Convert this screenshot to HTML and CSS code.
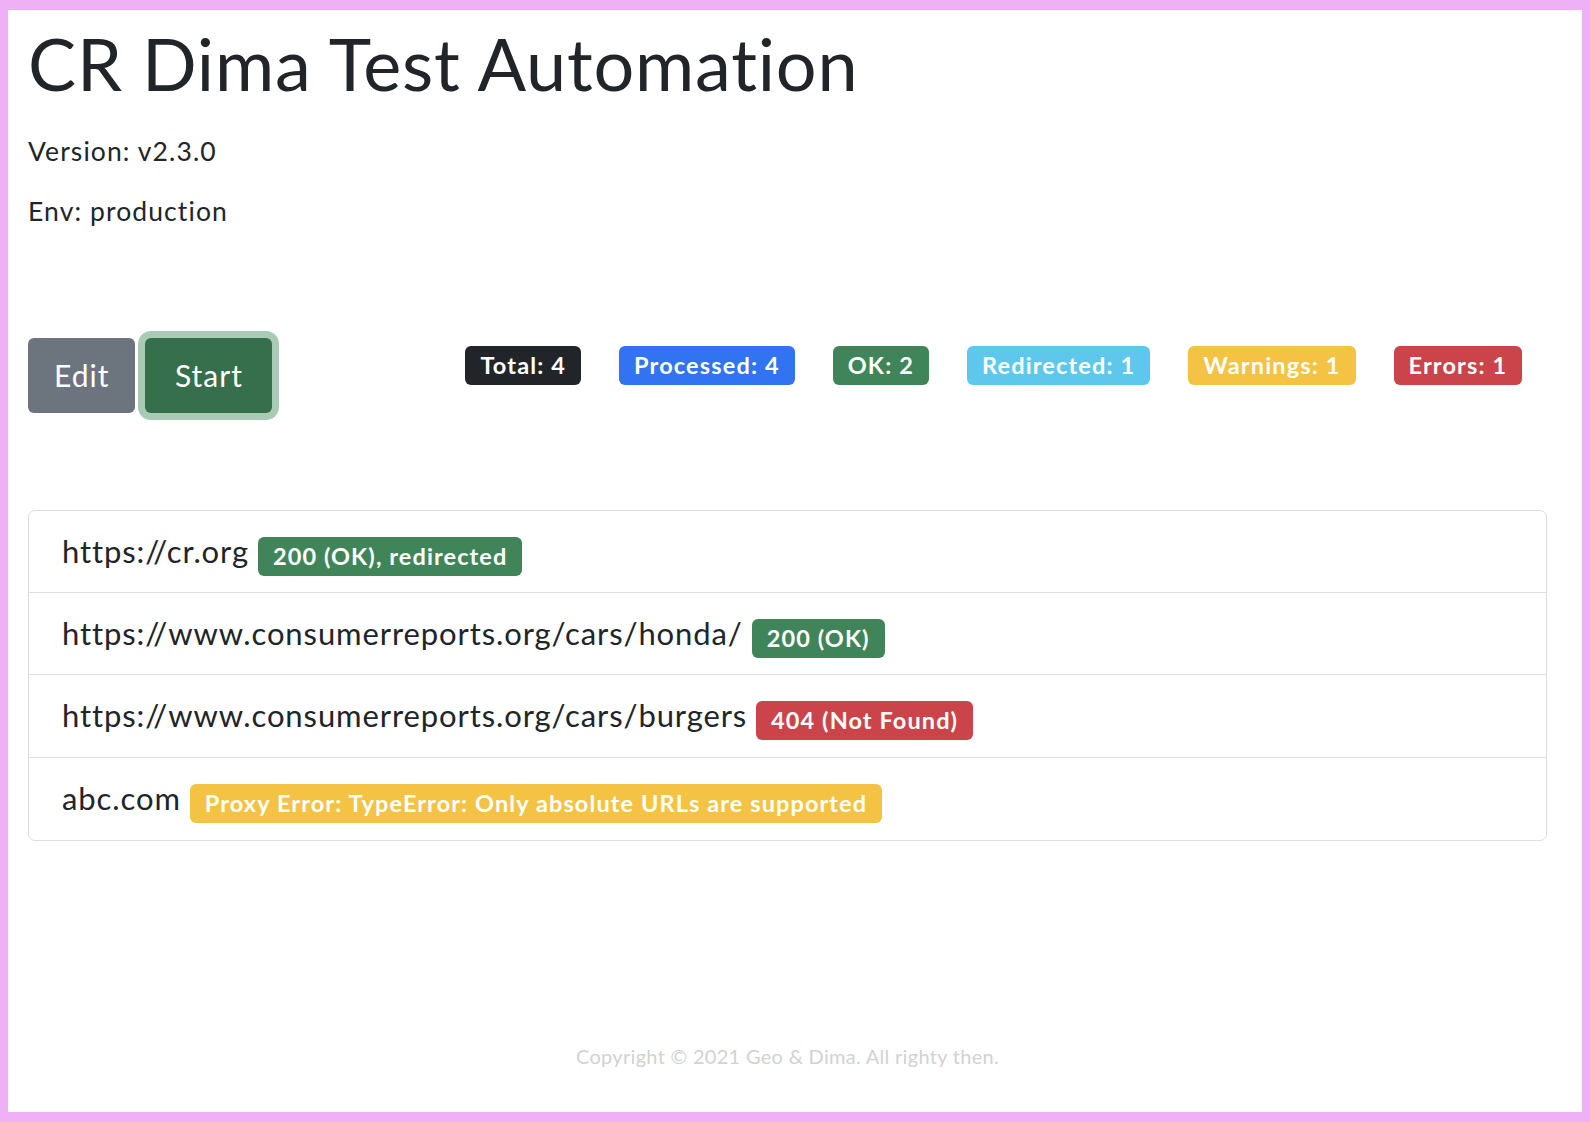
FILE: index.html
```html
<!DOCTYPE html>
<html lang="en">
<head>
<meta charset="utf-8">
<title>CR Dima Test Automation</title>
<link rel="stylesheet" href="styles.css">
</head>
<body>
<div class="frame">
  <main class="page">
    <h1 class="title">CR Dima Test Automation</h1>
    <p class="meta">Version: v2.3.0</p>
    <p class="meta">Env: production</p>

    <div class="toolbar">
      <div class="actions">
        <button class="btn btn-secondary" type="button">Edit</button>
        <button class="btn btn-success btn-focus" type="button">Start</button>
      </div>
      <div class="stats">
        <span class="badge bg-dark">Total: 4</span>
        <span class="badge bg-primary">Processed: 4</span>
        <span class="badge bg-success">OK: 2</span>
        <span class="badge bg-info">Redirected: 1</span>
        <span class="badge bg-warning">Warnings: 1</span>
        <span class="badge bg-danger">Errors: 1</span>
      </div>
    </div>

    <ul class="list">
      <li class="item"><span class="url">https://cr.org</span><span class="badge bg-success">200 (OK), redirected</span></li>
      <li class="item"><span class="url">https://www.consumerreports.org/cars/honda/</span><span class="badge bg-success">200 (OK)</span></li>
      <li class="item"><span class="url">https://www.consumerreports.org/cars/burgers</span><span class="badge bg-danger">404 (Not Found)</span></li>
      <li class="item"><span class="url">abc.com</span><span class="badge bg-warning">Proxy Error: TypeError: Only absolute URLs are supported</span></li>
    </ul>

    <footer class="footer">Copyright © 2021 Geo &amp; Dima. All righty then.</footer>
  </main>
</div>
</body>
</html>
```
FILE: styles.css
```css
html, body {
  margin: 0;
  padding: 0;
}

body {
  font-family: Lato, "Noto Sans", sans-serif;
  color: #212529;
  background: #ffffff;
}

.frame {
  box-sizing: border-box;
  height: 1122px;
  border-style: solid;
  border-color: #f0b0f6;
  border-width: 10px 8px 10px 8px;
  background: #ffffff;
}

.page {
  box-sizing: border-box;
  height: 100%;
  padding: 0 35px 0 20px;
  display: flex;
  flex-direction: column;
}

.title {
  margin: 10px 0 27px;
  font-size: 72px;
  line-height: 86px;
  font-weight: 400;
  letter-spacing: 0.8px;
}

.meta {
  margin: 0 0 24px;
  font-size: 26.5px;
  line-height: 36px;
  letter-spacing: 1.1px;
}

.toolbar {
  margin-top: 85px;
  display: flex;
  align-items: flex-start;
}

.actions {
  display: flex;
  gap: 10px;
}

.btn {
  border: 0;
  border-radius: 6px;
  padding: 15px 26px;
  font-family: Lato, "Noto Sans", sans-serif;
  font-size: 30px;
  line-height: 45px;
  letter-spacing: 1px;
  color: #ffffff;
  cursor: pointer;
}

.btn-secondary {
  background: #6c757d;
}

.btn-success {
  background: #366f4b;
  padding-left: 29.5px;
  padding-right: 29.5px;
}

.btn-focus {
  box-shadow: 0 0 0 7px #a9cbb6;
}

.stats {
  margin-left: 193px;
  margin-top: 8px;
  display: flex;
  gap: 38px;
}

.badge {
  display: inline-block;
  box-sizing: border-box;
  height: 39px;
  padding: 0 15px;
  border-radius: 6px;
  font-size: 23.5px;
  line-height: 39px;
  font-weight: 700;
  letter-spacing: 1.1px;
  color: #ffffff;
  white-space: nowrap;
}

.stats .badge {
  letter-spacing: 1.15px;
}

.bg-dark { background: #212529; }
.bg-primary { background: #3173f0; }
.bg-success { background: #40855a; }
.bg-info { background: #5dc8ec; }
.bg-warning { background: #f4c343; }
.bg-danger { background: #cb444a; }

.list {
  list-style: none;
  margin: 97px 0 0;
  padding: 0;
  border: 1px solid #dedede;
  border-radius: 7px;
}

.item {
  display: flex;
  align-items: flex-start;
  padding: 18px 33px 16px;
  border-top: 1px solid #dedede;
}

.item:first-child {
  border-top: 0;
}

.item:nth-child(n+3) {
  padding-bottom: 17px;
}

.url {
  font-size: 31px;
  line-height: 45px;
  letter-spacing: 0.9px;
}

.item .badge {
  margin: 8px 0 0 9px;
}

.footer {
  margin-top: auto;
  padding-bottom: 41px;
  text-align: center;
  font-size: 20px;
  line-height: 30px;
  letter-spacing: 0.3px;
  color: #d2d2d2;
}
```
